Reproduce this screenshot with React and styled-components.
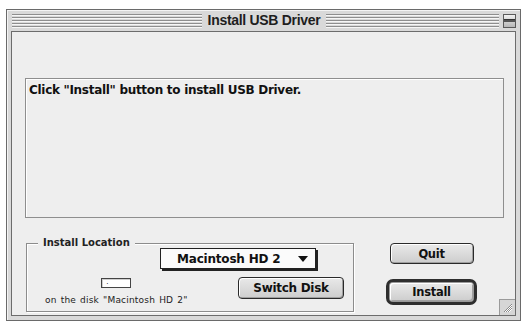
import React from "react";
import styled, { createGlobalStyle } from "styled-components";

const Global = createGlobalStyle`
  html, body { margin: 0; padding: 0; background: #ffffff; }
  body { font-family: "Liberation Sans", Arial, sans-serif; }
  * { box-sizing: border-box; }
`;

const Page = styled.div`
  width: 523px;
  height: 323px;
  padding: 9px 0 0 6px;
  background: #ffffff;
`;

const Window = styled.div`
  width: 515px;
  height: 312px;
  border: 1px solid #6a6a6a;
  background: #d9d9d9;
  padding: 0 4px 4px 4px;
  display: flex;
  flex-direction: column;
  box-shadow: inset 1px 1px 0 #f4f4f4;
`;

const TitleBar = styled.div`
  height: 21px;
  display: grid;
  grid-template-columns: 1fr auto 1fr;
  align-items: center;
  padding: 0 0 0 1px;
`;

const Stripes = styled.div`
  flex: 1;
  height: 14px;
  background: repeating-linear-gradient(
    to bottom,
    #8e8e8e 0 1px,
    #f6f6f6 1px 2px,
    #d9d9d9 2px 3px
  );
`;

const RightSide = styled.div`
  display: flex;
  align-items: center;
`;

const Title = styled.div`
  padding: 0 6px;
  font: bold 14px "Liberation Sans", Arial, sans-serif;
  color: #1e1e1e;
  letter-spacing: -0.3px;
  line-height: 21px;
`;

const ShadeBox = styled.div`
  width: 13px;
  height: 14px;
  margin-left: 4px;
  border: 1px solid #5a5a5a;
  background: linear-gradient(#f0f0f0, #b8b8b8);
  display: flex;
  align-items: center;
  justify-content: center;
`;

const ShadeBar = styled.div`
  width: 11px;
  height: 3px;
  background: #555;
  border-top: 1px solid #333;
`;

const Content = styled.div`
  flex: 1;
  border: 1px solid #6c6c6c;
  background: #eeeeee;
  position: relative;
  display: flex;
  flex-direction: column;
  padding: 46px 11px 0 13px;
`;

const MessageBox = styled.div`
  height: 140px;
  border: 1px solid #8e8e8e;
  box-shadow: inset 1px 1px 0 #ffffff;
  background: #eeeeee;
  padding: 4px 0 0 3px;
  font: bold 12px "DejaVu Sans", "Liberation Sans", sans-serif;
  letter-spacing: -0.3px;
  color: #111;
`;

const Bottom = styled.div`
  display: flex;
  margin-top: 25px;
  margin-left: 1px;
`;

const GroupBox = styled.div`
  position: relative;
  width: 328px;
  height: 69px;
  border: 1px solid #8c8c8c;
  box-shadow: inset 1px 1px 0 #ffffff, 1px 1px 0 #ffffff;
  display: flex;
  flex-direction: column;
`;

const GroupLabel = styled.div`
  position: absolute;
  top: -7px;
  left: 11px;
  padding: 0 5px;
  background: #eeeeee;
  font: bold 10px "DejaVu Sans", sans-serif;
  color: #222;
  line-height: 12px;
`;

const Popup = styled.div`
  margin: 4px 0 0 133px;
  width: 156px;
  height: 21px;
  border: 1px solid #222;
  background: #fbfbfb;
  box-shadow: 2px 2px 0 #222;
  display: flex;
  align-items: center;
  justify-content: space-between;
  padding: 0 7px 0 16px;
  font: bold 12px "DejaVu Sans", sans-serif;
  letter-spacing: -0.2px;
  color: #111;
`;

const Arrow = styled.span`
  width: 0;
  height: 0;
  border-left: 5px solid transparent;
  border-right: 5px solid transparent;
  border-top: 6px solid #111;
`;

const Row = styled.div`
  display: flex;
  align-items: flex-start;
  margin-top: 8px;
`;

const FieldBlock = styled.div`
  display: flex;
  flex-direction: column;
  align-items: center;
  margin-left: 18px;
`;

const TinyField = styled.div`
  width: 30px;
  height: 10px;
  margin-top: 1px;
  border: 1px solid #444;
  background: #ffffff;
  box-shadow: inset 1px 1px 0 #cfcfcf;
  font: 7px "DejaVu Sans", sans-serif;
  line-height: 7px;
  padding-left: 4px;
`;

const Caption = styled.div`
  margin-top: 7px;
  font: 9px "DejaVu Sans", sans-serif;
  letter-spacing: 0.2px;
  word-spacing: 1px;
  color: #222;
  white-space: nowrap;
`;

const Button = styled.div`
  width: ${(p) => p.$w}px;
  height: ${(p) => p.$h}px;
  border: 1px solid #2a2a2a;
  border-radius: 4px;
  background: linear-gradient(#e9e9e9, #cdcdcd);
  box-shadow: inset 1px 1px 0 #ffffff, inset -1px -1px 0 #a0a0a0;
  display: flex;
  align-items: center;
  justify-content: center;
  font: bold ${(p) => p.$fs || 11.5}px "DejaVu Sans", sans-serif;
  letter-spacing: -0.3px;
  color: #111;
`;

const SwitchButton = styled(Button)`
  margin-left: auto;
  margin-right: 9px;
`;

const ButtonColumn = styled.div`
  margin-left: 32px;
  width: 91px;
  display: flex;
  flex-direction: column;
  align-items: center;
`;

const DefaultRing = styled.div`
  margin-top: 15px;
  width: 91px;
  height: 26px;
  border: 3px solid #2e2e2e;
  border-radius: 7px;
  padding: 1px;
  background: #9a9a9a;
  display: flex;
`;

const InnerButton = styled(Button)`
  flex: 1;
  height: auto;
  border-width: 0;
  border-radius: 3px;
`;

const Grow = styled.svg`
  position: absolute;
  right: 0;
  bottom: 0;
`;

export default function App() {
  return (
    <>
      <Global />
      <Page>
        <Window>
          <TitleBar>
            <Stripes />
            <Title>Install USB Driver</Title>
            <RightSide>
              <Stripes />
              <ShadeBox>
                <ShadeBar />
              </ShadeBox>
            </RightSide>
          </TitleBar>
          <Content>
            <MessageBox>Click "Install" button to install USB Driver.</MessageBox>
            <Bottom>
              <GroupBox>
                <GroupLabel>Install Location</GroupLabel>
                <Popup>
                  <span>Macintosh HD 2</span>
                  <Arrow />
                </Popup>
                <Row>
                  <FieldBlock>
                    <TinyField>.</TinyField>
                    <Caption>on the disk "Macintosh HD 2"</Caption>
                  </FieldBlock>
                  <SwitchButton $w={106} $h={22} $fs={12}>
                    Switch Disk
                  </SwitchButton>
                </Row>
              </GroupBox>
              <ButtonColumn>
                <Button $w={84} $h={21}>Quit</Button>
                <DefaultRing>
                  <InnerButton $w={83} $h={18}>Install</InnerButton>
                </DefaultRing>
              </ButtonColumn>
            </Bottom>
            <Grow width="16" height="16" viewBox="0 0 16 16">
              <rect x="0" y="0" width="16" height="16" fill="#d6d6d6" />
              <line x1="0.5" y1="0" x2="0.5" y2="16" stroke="#9a9a9a" />
              <line x1="0" y1="0.5" x2="16" y2="0.5" stroke="#9a9a9a" />
              <path d="M5 13 L13 5 M7 13 L13 7 M9 13 L13 9" stroke="#8a8a8a" strokeWidth="1" />
              <path d="M6 13 L13 6 M8 13 L13 8 M10 13 L13 10" stroke="#ffffff" strokeWidth="1" />
            </Grow>
          </Content>
        </Window>
      </Page>
    </>
  );
}
